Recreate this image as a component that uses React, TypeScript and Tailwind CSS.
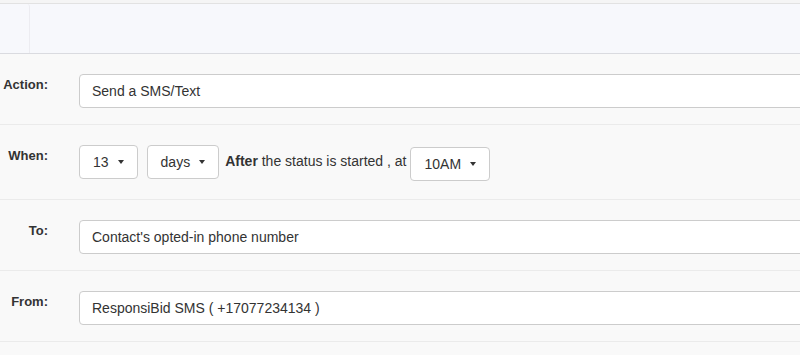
import React from 'react';

const Caret = () => (
  <span className="ml-[9px] inline-block w-0 h-0 border-l-[3.5px] border-r-[3.5px] border-t-[4px] border-l-transparent border-r-transparent border-t-[#333]" />
);

const SelectButton = ({ label, className = '' }: { label: string; className?: string }) => (
  <button className={`h-[34px] flex items-center px-[13px] bg-white border border-[#ccc] rounded-[4px] text-[14px] text-[#333] ${className}`}>
    <span>{label}</span>
    <Caret />
  </button>
);

const TextField = ({ value }: { value: string }) => (
  <div className="h-[34px] flex-1 flex items-center pl-3 bg-white border border-[#ccc] rounded-[4px] text-[14px] text-[#333] whitespace-nowrap -mr-[10px]">
    {value}
  </div>
);

const FormRow = ({ label, children, height }: { label: string; children: React.ReactNode; height: string }) => (
  <div className={`flex items-start pt-5 border-b border-[#ebebeb] ${height}`}>
    <div className="w-[48px] shrink-0 text-right pt-[1px] text-[13px] leading-5 font-bold text-[#333]">{label}</div>
    <div className="ml-[31px] flex-1 flex items-start min-w-0">{children}</div>
  </div>
);

export default function App() {
  return (
    <div className="w-[800px] h-[355px] overflow-hidden bg-[#f9f9f9] font-['Liberation_Sans',Arial,sans-serif]">
      <div className="h-[3px] bg-[#f5f5f5] border-b border-[#e2e2e2] box-content" />
      <div className="h-[49px] bg-[#f7f8fc] border-b border-[#dadbe0] box-content flex">
        <div className="w-[30px] border-r border-[#ececf1] rounded-tr-[3px]" />
      </div>

      <FormRow label="Action:" height="h-[71px]">
        <TextField value="Send a SMS/Text" />
      </FormRow>

      <FormRow label="When:" height="h-[75px]">
        <SelectButton label="13" />
        <SelectButton label="days" className="ml-[9px]" />
        <span className="ml-[6px] mt-[6px] text-[14px] leading-5 text-[#333] whitespace-nowrap">
          <b>After</b> the status is started , at
        </span>
        <SelectButton label="10AM" className="ml-[4px] mt-[2px]" />
      </FormRow>

      <FormRow label="To:" height="h-[71px]">
        <TextField value="Contact's opted-in phone number" />
      </FormRow>

      <FormRow label="From:" height="h-[71px]">
        <TextField value="ResponsiBid SMS ( +17077234134 )" />
      </FormRow>
    </div>
  );
}
